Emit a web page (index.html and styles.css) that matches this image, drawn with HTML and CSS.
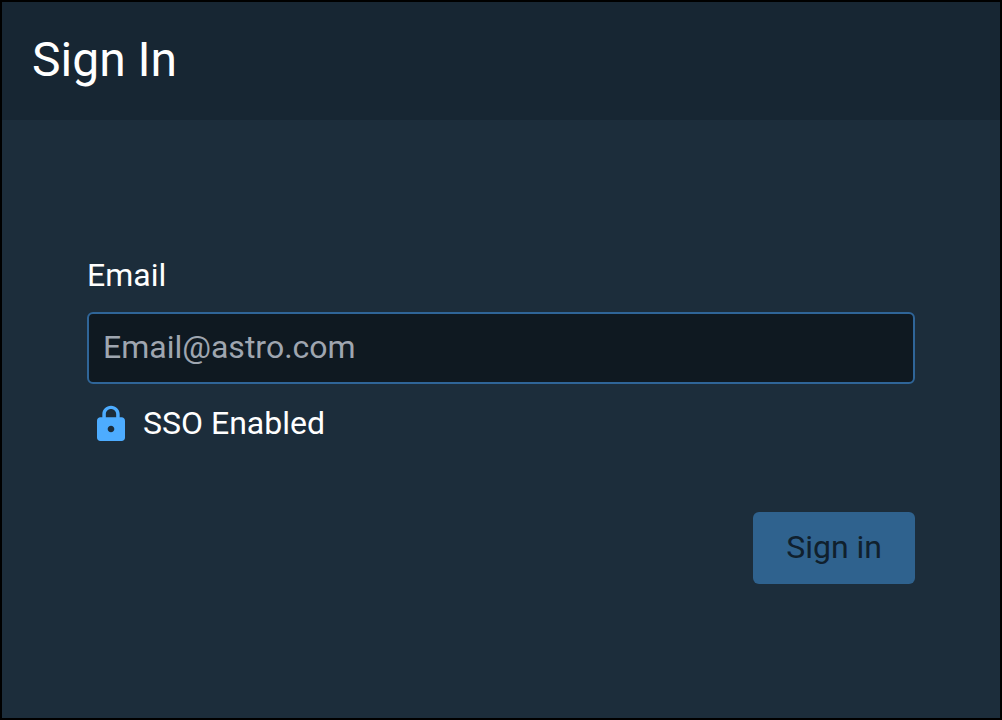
FILE: index.html
```html
<!DOCTYPE html>
<html lang="en">
<head>
  <meta charset="UTF-8">
  <meta name="viewport" content="width=device-width, initial-scale=1.0">
  <title>Sign In</title>
  <link rel="stylesheet" href="styles.css">
</head>
<body>
  <main class="dialog">
    <header class="dialog-header">
      <h1>Sign In</h1>
    </header>
    <form class="sign-in-form">
      <label class="form-label" for="email">Email</label>
      <input type="email" id="email" name="email" class="form-input" placeholder="Email@astro.com">
      <div class="sso">
        <svg class="sso-icon" viewBox="0 0 24 24" aria-hidden="true">
          <path d="M18.400 8H17.200V6c0-2.760-2.300-5-5.200-5S6.800 3.240 6.800 6v2H5.600c-1.100 0-2 .9-2 2v10.200c0 1.100.9 2 2 2h12.800c1.100 0 2-.9 2-2V10c0-1.100-.9-2-2-2zM12 17c-1.100 0-2-.9-2-2s.9-2 2-2 2 .9 2 2-.9 2-2 2zM8.900 8V6c0-1.660 1.400-3 3.100-3s3.100 1.340 3.100 3v2z" />
        </svg>
        <span>SSO Enabled</span>
      </div>
      <button type="submit" class="form-button" disabled>Sign in</button>
    </form>
  </main>
</body>
</html>
```
FILE: styles.css
```css
* {
  box-sizing: border-box;
}
body {
  margin: 0;
  background-color: #1c2d3b;
  color: #ffffff;
  font-family: Roboto, sans-serif;
  font-size: 32px;
  line-height: 38px;
}
.dialog {
  min-height: 100vh;
  border: 2px solid #000000;
}
.dialog-header {
  padding: 30px 30px 32px;
  background-color: #172633;
}
h1 {
  margin: 0;
  font-size: 48px;
  font-weight: 400;
  line-height: 56px;
}
.sign-in-form {
  display: flex;
  flex-direction: column;
  padding: 136px 85px 80px;
}
.form-label {
  margin-bottom: 18px;
}
.form-input {
  width: 100%;
  height: 72px;
  padding: 0 14px 2px;
  border: 2px solid #2f6598;
  border-radius: 6px;
  background-color: #0f1921;
  color: #ffffff;
  font: inherit;
}
.form-input::placeholder {
  color: #9fa6b0;
}
.sso {
  display: flex;
  gap: 12px;
  margin-top: 20px;
  padding-left: 4px;
}
.sso-icon {
  width: 40px;
  height: 40px;
  fill: #4dacff;
}
.form-button {
  align-self: flex-end;
  height: 72px;
  margin-top: 68px;
  padding: 0 33px 2px;
  border: none;
  border-radius: 6px;
  background-color: #2f628e;
  color: #10202d;
  font: inherit;
}
```
